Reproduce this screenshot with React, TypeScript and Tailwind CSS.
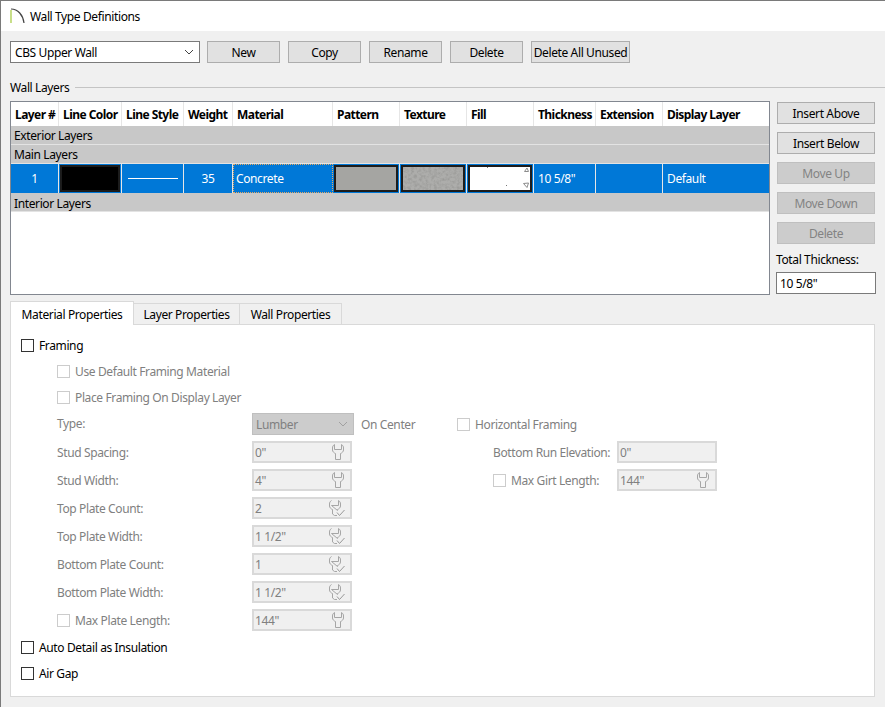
import React from "react";

const F = "font-['Noto_Sans','Liberation_Sans',sans-serif]";

function T({ children }: { children: React.ReactNode }) {
  return <span className="pt-[2px] whitespace-nowrap">{children}</span>;
}

function Wrench({ check = false }: { check?: boolean }) {
  return (
    <svg width="18" height="18" viewBox="0 0 18 18" fill="none" stroke="#a6a6a6" strokeWidth="1">
      {check ? (
        <path d="M3.5 1.5 C2 2.5 1.5 3.5 1.5 5 V7 C1.5 8.5 3 10 4.5 10.5 V15 L6.5 16.5 H9 M9.5 11.5 V10.5 C11 10 12.5 8.5 12.5 7 V5 C12.5 3.5 12 2.5 10.5 1.5 V6.5 H3.5 Z" />
      ) : (
        <path d="M3.5 1.5 C2 2.5 1.5 3.5 1.5 5 V7 C1.5 8.5 3 10 4.5 10.5 V16.5 H9.5 V10.5 C11 10 12.5 8.5 12.5 7 V5 C12.5 3.5 12 2.5 10.5 1.5 V6.5 H3.5 Z" />
      )}
      {check && <path d="M9 13.5 L11.5 16.5 L16.5 11" stroke="#999999" />}
    </svg>
  );
}

function Btn({ w = "w-[73px]", disabled = false, children }: { w?: string; disabled?: boolean; children: React.ReactNode }) {
  return (
    <div
      className={`${w} h-[22px] flex items-center justify-center border text-[12px] ${
        disabled ? "bg-[#cccccc] border-[#bfbfbf] text-[#838383]" : "bg-[#e1e1e1] border-[#adadad] text-[#000000]"
      }`}
    >
      <T>{children}</T>
    </div>
  );
}

function Check({ disabled = false }: { disabled?: boolean }) {
  return <div className={`w-[13px] h-[13px] border bg-white shrink-0 ${disabled ? "border-[#cccccc]" : "border-[#333333]"}`} />;
}

function Field({ value, icon, w = "w-[100px]" }: { value: string; icon?: "plain" | "check"; w?: string }) {
  return (
    <div className={`${w} h-[22px] border-2 border-[#d9d9d9] bg-[#f0f0f0] flex items-center justify-between text-[12px] text-[#808080] pl-[1px]`}>
      <T>{value}</T>
      {icon && (
        <span className={icon === "check" ? "mr-[4px] flex" : "mr-[1px] flex"}>
          <Wrench check={icon === "check"} />
        </span>
      )}
    </div>
  );
}

const columns = [
  ["Layer #", "w-[48px]"],
  ["Line Color", "w-[63px]"],
  ["Line Style", "w-[62px]"],
  ["Weight", "w-[49px]"],
  ["Material", "w-[100px]"],
  ["Pattern", "w-[67px]"],
  ["Texture", "w-[67px]"],
  ["Fill", "w-[67px]"],
  ["Thickness", "w-[62px]"],
  ["Extension", "w-[67px]"],
  ["Display Layer", "flex-1"],
];

function Section({ label, low = false }: { label: string; low?: boolean }) {
  return (
    <div className={`h-[19px] bg-[#c8c8c8] border-b border-[#e3e3e3] flex items-center pl-[3px] text-[12px] text-black ${low ? "pt-[2px]" : ""}`}>
      <T>{label}</T>
    </div>
  );
}

function Swatch({ w, className, children }: { w: string; className: string; children?: React.ReactNode }) {
  return (
    <div className={`${w} h-full border-r border-[#e6e6e6] p-[1px]`}>
      <div className={`w-full h-full border-2 border-[#1c1c1c] overflow-hidden ${className}`}>{children}</div>
    </div>
  );
}

function FormRow({ label, value, icon, indent = false }: { label: string; value: string; icon: "plain" | "check"; indent?: boolean }) {
  return (
    <div className="h-[22px] mb-[6px] flex items-center text-[12px] text-[#808080]">
      <div className="w-[195px] flex items-center">
        {indent && <span className="mr-[5px]"><Check disabled /></span>}
        <T>{label}</T>
      </div>
      <Field value={value} icon={icon} />
    </div>
  );
}

export default function App() {
  return (
    <div className={`w-[885px] h-[707px] overflow-hidden bg-[#f0f0f0] border-t border-l border-[#7a7a7a] ${F} text-[12px] leading-none tracking-[-0.38px] text-black`}>
      <div className="h-[30px] bg-white flex items-center pl-[8px]">
        <svg width="18" height="18" viewBox="0 0 18 18" fill="none">
          <path d="M2 3 V16" stroke="#a3c93a" strokeWidth="1.2" />
          <path d="M2 2 C9 2 14 8 15 16" stroke="#444444" strokeWidth="1.2" />
        </svg>
        <span className="ml-[3px] pt-[2px] text-[12px]">Wall Type Definitions</span>
      </div>

      <div className="pl-[9px] pr-[9px]">
        <div className="mt-[10px] flex items-center gap-[8px]">
          <div className="w-[190px] h-[22px] mr-[-1px] bg-white border border-[#7a7a7a] flex items-center justify-between pl-[4px] pr-[5px]">
            <T>CBS Upper Wall</T>
            <svg width="10" height="6" viewBox="0 0 10 6" fill="none" stroke="#444" strokeWidth="1"><path d="M1 1 L5 5 L9 1" /></svg>
          </div>
          <Btn>New</Btn>
          <Btn>Copy</Btn>
          <Btn>Rename</Btn>
          <Btn>Delete</Btn>
          <Btn w="w-[99px]">Delete All Unused</Btn>
        </div>

        <div className="mt-[17px] h-[14px] flex items-center">
          <T>Wall Layers</T>
          <div className="ml-[6px] flex-1 border-t border-[#c4c4c4] mr-[-10px]" />
        </div>

        <div className="mt-[7px] flex">
          <div className="w-[760px] h-[194px] bg-white border border-[#828790] shrink-0">
            <div className="h-[24px] flex font-bold tracking-[-0.55px]">
              {columns.map(([name, w]) => (
                <div key={name} className={`${w} h-full border-r border-[#e6e6e6] last:border-r-0 flex items-center pl-[4px] text-[12px]`}>
                  <T>{name}</T>
                </div>
              ))}
            </div>
            <Section label="Exterior Layers" />
            <Section label="Main Layers" />
            <div className="h-[29px] bg-[#0078d7] text-white flex border-b-0">
              <div className="w-[48px] h-full border-r border-[#e6e6e6] flex items-center justify-center">1</div>
              <Swatch w="w-[63px]" className="bg-black" />
              <div className="w-[62px] h-full border-r border-[#e6e6e6] flex items-center justify-center">
                <div className="w-[50px] border-t border-white" />
              </div>
              <div className="w-[49px] h-full border-r border-[#e6e6e6] flex items-center justify-center">35</div>
              <div className="w-[100px] h-full border border-dotted border-[#e8a860] flex items-center pl-[2px]">Concrete</div>
              <Swatch w="w-[67px]" className="bg-[#a5a5a2]" />
              <Swatch w="w-[67px]" className="bg-[#adadab]">
                <svg width="60" height="23" className="block">
                  <filter id="concrete" x="0" y="0" width="100%" height="100%">
                    <feTurbulence type="fractalNoise" baseFrequency="0.35" numOctaves="3" seed="4" />
                    <feColorMatrix values="0 0 0 0 0.3  0 0 0 0 0.3  0 0 0 0 0.29  1.6 0 0 0 -0.6" />
                  </filter>
                  <rect width="60" height="23" filter="url(#concrete)" />
                </svg>
              </Swatch>
              <Swatch w="w-[67px]" className="bg-white">
                <svg width="60" height="23" viewBox="0 0 60 23" fill="none" stroke="#8c8c8c" className="block">
                  <path d="M54.5 4.5 L57 1 L58.5 4.5 Z" />
                  <path d="M53.5 16.5 L58.5 16 L57 20.5 Z" />
                  <rect x="17" y="0" width="1" height="1" fill="#777" stroke="none" />
                  <rect x="36" y="18" width="1" height="1" fill="#777" stroke="none" />
                </svg>
              </Swatch>
              <div className="w-[62px] h-full border-r border-[#e6e6e6] flex items-center pl-[4px] whitespace-nowrap">10 5/8"</div>
              <div className="w-[67px] h-full border-r border-[#e6e6e6]" />
              <div className="flex-1 flex items-center pl-[4px]">Default</div>
            </div>
            <Section label="Interior Layers" low />
          </div>

          <div className="ml-[6px] flex flex-col w-[100px]">
            <div className="flex flex-col gap-[8px] pl-[1px] pt-[1px]">
              <Btn w="w-[98px]">Insert Above</Btn>
              <Btn w="w-[98px]">Insert Below</Btn>
              <Btn w="w-[98px]" disabled>Move Up</Btn>
              <Btn w="w-[98px]" disabled>Move Down</Btn>
              <Btn w="w-[98px]" disabled>Delete</Btn>
            </div>
            <div className="mt-[8px] h-[14px] flex items-center"><T>Total Thickness:</T></div>
            <div className="mt-[6px] h-[22px] border border-[#7a7a7a] bg-white flex items-center pl-[3px]"><T>10 5/8"</T></div>
          </div>
        </div>

        <div className="mt-[6px] flex items-end h-[24px] relative z-10">
          <div className="w-[124px] h-[24px] bg-white border border-[#d9d9d9] border-b-0 flex items-center justify-center"><T>Material Properties</T></div>
          <div className="w-[106px] h-[22px] bg-[#f0f0f0] border border-l-0 border-[#d9d9d9] flex items-center justify-center"><T>Layer Properties</T></div>
          <div className="w-[102px] h-[22px] bg-[#f0f0f0] border border-l-0 border-[#d9d9d9] flex items-center justify-center"><T>Wall Properties</T></div>
        </div>

        <div className="w-[865px] h-[373px] mt-[-1px] bg-white border border-[#d9d9d9] pl-[10px] pt-[14px]">
          <div className="h-[13px] flex items-center"><Check /><span className="ml-[5px]">Framing</span></div>
          <div className="ml-[36px] mt-[13px] h-[13px] flex items-center text-[#808080]"><Check disabled /><span className="ml-[5px]">Use Default Framing Material</span></div>
          <div className="ml-[36px] mt-[13px] h-[13px] flex items-center text-[#808080]"><Check disabled /><span className="ml-[5px]">Place Framing On Display Layer</span></div>

          <div className="ml-[36px] mt-[9px] flex items-start">
            <div className="w-[400px]">
              <div className="h-[22px] mb-[6px] flex items-center text-[#808080]">
                <div className="w-[195px]"><T>Type:</T></div>
                <div className="w-[102px] h-[22px] bg-[#cccccc] border border-[#bfbfbf] flex items-center justify-between pl-[3px] pr-[5px]">
                  <T>Lumber</T>
                  <svg width="10" height="6" viewBox="0 0 10 6" fill="none" stroke="#a0a0a0"><path d="M1 1 L5 5 L9 1" /></svg>
                </div>
                <span className="ml-[7px] pt-[2px]">On Center</span>
              </div>
              <FormRow label="Stud Spacing:" value={'0"'} icon="plain" />
              <FormRow label="Stud Width:" value={'4"'} icon="plain" />
              <FormRow label="Top Plate Count:" value="2" icon="check" />
              <FormRow label="Top Plate Width:" value={'1 1/2"'} icon="check" />
              <FormRow label="Bottom Plate Count:" value="1" icon="check" />
              <FormRow label="Bottom Plate Width:" value={'1 1/2"'} icon="check" />
              <FormRow label="Max Plate Length:" value={'144"'} icon="plain" indent />
            </div>
            <div className="text-[#808080]">
              <div className="h-[22px] mb-[6px] flex items-center"><Check disabled /><span className="ml-[5px] pt-[2px]">Horizontal Framing</span></div>
              <div className="h-[22px] mb-[6px] flex items-center">
                <div className="w-[160px] pl-[36px] flex items-center"><T>Bottom Run Elevation:</T></div>
                <Field value={'0"'} />
              </div>
              <div className="h-[22px] mb-[6px] flex items-center">
                <div className="w-[160px] pl-[36px] flex items-center"><Check disabled /><span className="ml-[5px] pt-[2px]">Max Girt Length:</span></div>
                <Field value={'144"'} icon="plain" />
              </div>
            </div>
          </div>

          <div className="mt-[4px] h-[13px] flex items-center"><Check /><span className="ml-[5px]">Auto Detail as Insulation</span></div>
          <div className="mt-[13px] h-[13px] flex items-center"><Check /><span className="ml-[5px]">Air Gap</span></div>
        </div>
      </div>
    </div>
  );
}
